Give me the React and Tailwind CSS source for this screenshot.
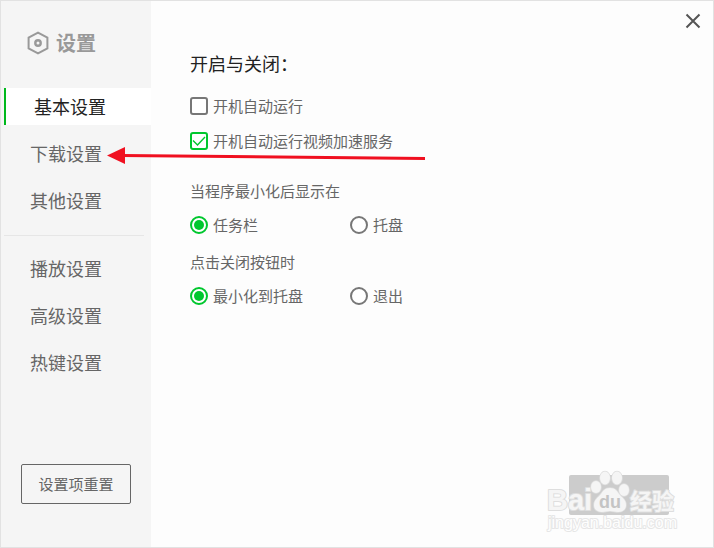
import React, { useState } from 'react';

const groups = [
  ['基本设置', '下载设置', '其他设置'],
  ['播放设置', '高级设置', '热键设置'],
];

function NavItem({ label, active, onSelect }) {
  return (
    <li>
      <button
        type="button"
        onClick={onSelect}
        className={
          active
            ? 'block h-[37px] w-full border-l-2 border-[#00b81c] bg-white pl-7 text-left text-lg leading-[37px] text-[#222]'
            : 'block h-[37px] w-full pl-[26px] text-left text-lg leading-[37px] text-[#666]'
        }
      >
        {label}
      </button>
    </li>
  );
}

function Check({ label, defaultChecked }) {
  return (
    <label className="flex h-[18px] items-center gap-[5px]">
      <span className="grid size-[18px] place-items-center">
        <input
          type="checkbox"
          defaultChecked={defaultChecked}
          className="peer col-start-1 row-start-1 size-[18px] appearance-none rounded-[3px] border-2 border-[#777] bg-white checked:border-[#00c72e]"
        />
        <svg viewBox="0 0 18 18" className="pointer-events-none col-start-1 row-start-1 hidden size-[18px] peer-checked:block" fill="none" stroke="#00c72e" strokeWidth="1.4">
          <path d="M3 8.5 L7.5 13 L15 5" />
        </svg>
      </span>
      {label}
    </label>
  );
}

function Radio({ name, label, defaultChecked }) {
  return (
    <label className="flex h-[18px] items-center gap-[5px]">
      <span className="grid size-[18px] place-items-center">
        <input
          type="radio"
          name={name}
          defaultChecked={defaultChecked}
          className="peer col-start-1 row-start-1 size-[18px] appearance-none rounded-full border-2 border-[#777] bg-white checked:border-[#00c72e]"
        />
        <span className="pointer-events-none col-start-1 row-start-1 hidden size-[10px] rounded-full bg-[#00c72e] peer-checked:block" />
      </span>
      {label}
    </label>
  );
}

function Watermark() {
  return (
    <svg viewBox="0 0 140 70" className="pointer-events-none absolute right-[34px] bottom-[10px] h-[70px] w-[140px]" aria-hidden="true">
      <g
        fill="#f5f5f5"
        stroke="#dedede"
        strokeWidth="2"
        strokeLinejoin="round"
        paintOrder="stroke"
        fontFamily="'Liberation Sans', 'Noto Sans CJK SC', sans-serif"
        fontWeight="700"
      >
        <text x="8" y="43" fontSize="29">Bai</text>
        <text x="91" y="42" fontSize="22">经验</text>
        <text x="9" y="61" fontSize="16" fontWeight="400" fill="#fefefe" stroke="#e6e6e6">jingyan.baidu.com</text>
        <g strokeWidth="1.5">
          <ellipse cx="57" cy="20" rx="5" ry="6" />
          <ellipse cx="66" cy="11" rx="5" ry="6.5" />
          <ellipse cx="78" cy="11" rx="5" ry="6.5" />
          <ellipse cx="85" cy="23" rx="5" ry="6" />
          <path d="M71 21c-5 0-7 3-9 6s-7 5-7 11c0 5 4 7 8 7 3 0 5-1 8-1s5 1 8 1c5 0 8-3 8-7 0-6-5-8-7-11s-4-6-9-6z" />
        </g>
        <text x="60" y="41" fontSize="18" fill="#c4c4c4" stroke="none">du</text>
      </g>
    </svg>
  );
}

export default function App() {
  const [current, setCurrent] = useState('基本设置');
  return (
    <div className="relative flex h-screen w-full border border-[#e2e2e2] bg-[#fdfdfd] font-['Noto_Sans_CJK_SC',sans-serif] text-[15px] text-[#666]">
      <aside className="flex w-[150px] shrink-0 flex-col bg-[#f5f5f5] pl-[3px]">
        <h1 className="mt-7 flex h-7 items-center gap-[6px] pl-[22px] text-xl font-bold text-[#999]">
          <svg viewBox="0 0 24 24" className="size-6" fill="none" stroke="#999" strokeWidth="2">
            <path d="M12 1.6 21.4 6.6V17.4L12 22.4 2.6 17.4V6.6Z" />
            <circle cx="12" cy="12" r="2.7" strokeWidth="2.4" />
          </svg>
          设置
        </h1>
        <nav className="mt-[31px]">
          {groups.map((group, i) => (
            <ul
              key={i}
              className={i === 0 ? 'flex flex-col gap-[10px]' : 'mt-4 mr-[7px] flex flex-col gap-[10px] border-t border-[#e6e6e6] pt-[14px]'}
            >
              {group.map((label) => (
                <NavItem key={label} label={label} active={label === current} onSelect={() => setCurrent(label)} />
              ))}
            </ul>
          ))}
        </nav>
        <button type="button" className="mt-auto mr-5 mb-[43px] ml-[17px] h-10 rounded-xs border border-[#666]">
          设置项重置
        </button>
      </aside>

      <main className="flex-1 pt-[49px] pl-[39px]">
        <h2 className="h-[26px] text-lg leading-[26px] text-[#222]">开启与关闭：</h2>
        <div className="mt-[21px] flex flex-col gap-[17px]">
          <Check label="开机自动运行" />
          <Check label="开机自动运行视频加速服务" defaultChecked />
        </div>
        <fieldset className="mt-[29px]">
          <legend className="h-6 leading-6">当程序最小化后显示在</legend>
          <div className="mt-[13px] grid grid-cols-[160px_1fr]">
            <Radio name="minimize" label="任务栏" defaultChecked />
            <Radio name="minimize" label="托盘" />
          </div>
        </fieldset>
        <fieldset className="mt-4">
          <legend className="h-6 leading-6">点击关闭按钮时</legend>
          <div className="mt-[13px] grid grid-cols-[160px_1fr]">
            <Radio name="close" label="最小化到托盘" defaultChecked />
            <Radio name="close" label="退出" />
          </div>
        </fieldset>
      </main>

      <button type="button" aria-label="关闭" className="absolute top-3 right-3">
        <svg viewBox="0 0 16 16" className="size-4" fill="none" stroke="#555" strokeWidth="2">
          <path d="M1.5 1.5 14.5 14.5M14.5 1.5 1.5 14.5" />
        </svg>
      </button>

      <button type="button" aria-label="完成" className="absolute right-11 bottom-8 h-10 w-[100px] rounded-xs bg-[#ccc]" />
      <Watermark />

      <svg viewBox="0 0 320 20" className="pointer-events-none absolute top-[145px] left-[105px] h-5 w-[320px]" aria-hidden="true">
        <path d="M16 9.5 319 12.5" stroke="#f01020" strokeWidth="3" fill="none" />
        <path d="M1 9.5 19 1V18Z" fill="#f01020" />
      </svg>
    </div>
  );
}
